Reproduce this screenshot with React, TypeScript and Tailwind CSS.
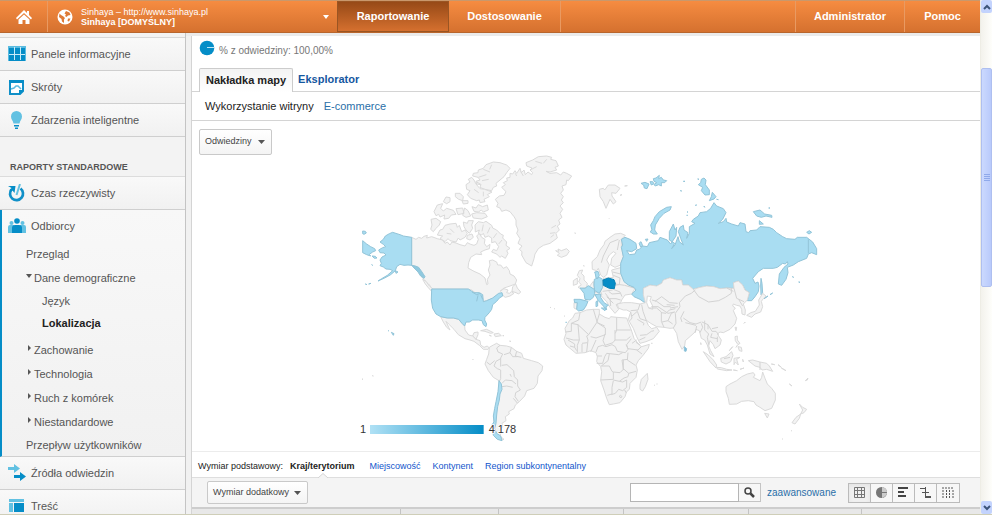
import React from "react";

const land = "fill-[#f3f3f3] stroke-[#dadada]";
const visited = "fill-[#a9ddf2] stroke-[#92c4d8]";

function WorldMap() {
  return (
    <svg viewBox="0 0 1440 900" className="block h-[300px] w-[480px]" role="img" aria-label="Mapa odwiedzin" strokeWidth="3" strokeLinejoin="round">
      <defs>
        <linearGradient id="scale" x1="0" x2="1" y1="0" y2="0">
          <stop offset="0" stopColor="#b0e1f5" />
          <stop offset="1" stopColor="#058dc7" />
        </linearGradient>
      </defs>

      {/* North America and Greenland */}
      <g className={land}>
        <path d="M185,262L198,268 206,262 215,265 222,259 232,256 230,264 245,260 262,266 278,270 285,280 292,276 300,285 306,276 318,279 330,284 345,288 352,278 362,283 372,286 380,282 385,268 380,258 388,250 395,262 405,268 403,280 410,290 420,283 418,296 405,300 392,306 395,314 378,312 362,322 356,338 354,354 372,364 390,372 405,384 410,404 414,402 412,388 420,375 415,360 420,345 418,332 428,330 440,336 443,345 452,345 460,355 470,350 478,362 480,372 492,378 500,390 496,402 480,408 462,414 450,424 462,416 474,420 470,428 478,430 484,425 492,430 480,438 466,442 460,438 456,430 440,440 425,446 410,452 400,455 398,445 390,432 378,430 365,420 350,417 245,417 240,406 234,402 222,388 212,378 196,350 185,346Z" />
        <path d="M218,388L228,394 238,408 252,420 244,423 234,412 226,402Z" />
        <path d="M488,410L497,402 502,414 512,426 506,432 498,428 486,424Z" />
        <path d="M375,225L385,215 400,218 408,214 425,226 428,234 440,240 452,252 460,256 458,264 470,276 468,286 480,295 470,302 474,310 466,325 455,318 450,322 440,312 425,306 430,298 440,302 446,290 436,275 425,278 425,264 415,258 405,262 400,250 395,255 385,250 388,240 376,246Z" />
        <path d="M262,255L270,240 278,238 285,226 300,222 318,220 322,232 328,226 335,245 345,240 352,250 345,262 330,270 325,264 318,276 300,272 294,266 285,275 270,265 278,258Z" />
        <path d="M243,208L258,205 272,215 268,225 258,235 250,245 242,238 246,225Z" />
        <path d="M340,216L352,220 355,212 370,212 365,225 368,235 358,250 348,240 342,230ZM352,256l14,-4 4,10 -10,8 -10,-4z" />
        <path d="M480,55L470,45 450,38 430,36 408,44 400,55 385,60 384,68 370,70 368,78 384,82 390,90 378,94 380,102 392,104 390,112 404,118 425,122 430,112 440,108 438,100 450,90 462,80 470,68Z" />
        <path d="M365,82L355,88 360,96 348,104 350,118 360,122 352,134 362,145 380,152 388,150 390,158 405,155 402,148 418,140 412,134 426,126 404,118 390,116 378,102 372,90Z" />
        <path d="M366,170L378,174 385,164 398,170 412,165 415,180 400,186 394,180 385,186 372,184ZM365,192L380,188 405,190 412,200 395,207 370,204Z" />
        <path d="M252,185l10,-20 16,-4 -6,14 8,8 10,-8 20,6 8,12 -14,2 -8,10 -14,2 2,-12 -14,6 -4,-8 -8,4zM280,155l8,-14 12,2 0,12 -10,6zM316,130l14,0 10,10 -2,12 -12,-4 -10,-8zM336,152l18,0 0,8 -14,2zM318,176l20,-2 4,16 -18,4zM344,174l10,8 8,16 -14,4 -10,-6z" />
        <path d="M480,70L488,72 495,62 500,70 510,55 514,68 522,60 526,74 534,66 545,74 548,68 540,60 546,54 530,48 528,38 548,30 565,20 590,18 605,22 602,28 618,32 625,48 615,52 620,60 600,66 588,64 600,70 620,68 632,75 640,66 650,70 665,78 655,92 650,90 648,104 636,108 640,120 632,130 640,140 634,150 640,158 630,168 638,178 630,190 636,202 626,210 630,222 622,228 628,240 618,250 622,264 600,280 580,286 565,296 555,312 552,326 545,348 528,338 515,315 516,305 508,298 516,288 504,280 510,266 500,250 504,240 498,225 498,210 492,200 480,185 468,180 455,184 450,174 440,170 444,160 436,148 448,138 462,136 468,125 455,112 466,104 460,98 472,92 470,84 480,82Z" />
        <path d="M617,302L626,304 624,297 634,302 650,296 658,304 650,316 634,322 622,316 628,310Z" />
      </g>
      <g className="fill-none stroke-[#dadada]">
        <path d="M400,58l20,8M385,82l24,-8M396,92l20,-4M425,44l-6,14M372,118l14,10M400,125l0,14M380,96l14,8M400,224l-4,20M420,232l-8,18M440,250l-10,14M456,270l-10,12M300,236l12,12M290,250l14,2M540,60l20,-10M556,34l20,6M590,28l-10,12M520,78l-8,-14M500,78l-4,-8M604,234l14,-8M600,250l16,-2M602,262l10,-8" />
      </g>
      <g className={visited}>
        <path d="M185,262L160,258 150,254 128,247 118,251 106,258 100,268 90,276 100,283 107,290 98,293 86,300 90,308 102,309 108,315 96,321 90,330 94,340 90,347 100,351 108,357 120,358 128,362 112,376 95,386 84,393 104,384 122,374 136,362 140,350 150,343 162,346 174,345 185,346Z" />
        <path d="M38,272L50,282 62,290 74,296 77,302 68,306 58,313 62,318 50,314 38,308ZM38,243l8,1 3,5 -7,4 -4,-2zM66,318l10,1 5,5 -8,1zM136,362l8,4 -6,4zM65,344l3,2zM46,402l5,2zM56,402l7,-2z" />
        <path className="fill-[#8fc9df]" d="M185,346L196,348 206,352 216,366 225,380 222,385 212,378 204,366 192,354Z" />
      </g>

      {/* United States, Latin America */}
      <g transform="translate(0 420)">
        <g className={land}>
          <path d="M272,80L292,84 310,84 326,88 336,100 344,108 345,120 356,135 368,138 372,128 384,126 384,134 378,148 390,152 392,165 402,172 412,168 418,174 414,178 400,178 388,166 372,154 360,150 345,146 325,134 312,118 296,102 288,94 296,112 300,120 290,112 280,96Z" />
          <path d="M392,122L410,118 430,128 422,130 405,124ZM432,132L446,130 454,137 436,140ZM458,137l4,0zM418,136l6,2zM480,152l1,4zM368,207l1,2zM36,267l3,1zM67,257l3,1zM600,52l3,1zM613,56l2,1zM643,78l2,1z" />
          <path d="M418,172L430,165 440,160 450,166 470,168 484,172 500,184 515,190 520,205 545,212 565,218 578,228 576,242 564,258 562,280 552,295 530,302 524,318 508,335 496,345 492,356 476,365 478,372 466,380 468,392 456,400 458,410 450,420 452,440 462,448 455,450 440,440 430,420 432,380 440,340 448,290 447,272 430,262 415,242 405,222 410,208 416,192Z" />
        </g>
        <path className="fill-none stroke-[#d3d3d3]" d="M450,166l-10,8 4,12 14,6 -6,12 0,26M484,172l-4,16 -18,6 M500,184l-4,14 18,4M480,188l8,12 14,0 M452,206l-14,8 -6,14 10,8 10,4 0,26 -4,8M410,216l10,8 14,-12M455,226l16,-2 20,18 2,18 10,10 0,18 8,12 -14,8 -2,12 10,14M456,280l10,-10 20,2 12,10M456,290l14,-2 18,4M490,325l12,14M484,260l-4,-8M368,138l10,10" />
        <g className={visited}>
          <path d="M245,-3L355,-3 372,8 388,8 398,14 400,35 410,32 428,24 446,10 456,8 458,18 448,24 440,34 428,44 425,58 418,68 405,82 404,90 410,102 408,110 400,104 396,92 385,90 368,90 358,96 348,96 344,108 336,100 326,88 310,84 292,84 272,80 258,72 248,55 244,30Z" />
          <path className="fill-none" d="M366,6l14,8 12,-4M384,16l-4,18M392,14l6,14" />
          <path d="M447,272L454,282 456,298 450,312 448,330 443,350 440,375 438,400 434,415 440,430 452,438 456,452 442,448 430,436 428,420 432,412 426,405 432,395 430,378 434,355 438,335 444,305Z" />
          <path d="M115,122l2,1zM124,127l8,4 -2,5zM647,97l3,0zM656,98l2,0z" />
        </g>
      </g>

      {/* Europe and northern Asia */}
      <g transform="translate(630 0)">
        <g className={land}>
          <path d="M118,118L130,115 134,120 145,105 165,105 180,115 168,130 155,128 156,138 168,155 160,162 150,148 138,175 130,155 120,140ZM180,136l6,-2zM194,108l8,-1zM148,206l1,1zM44,249l3,1zM70,347l3,1z" />
          <path d="M190,262L196,256 182,250 165,252 150,262 135,274 132,284 120,300 112,320 96,335 97,358 110,362 115,355 122,375 130,382 140,375 145,355 148,345 140,330 148,315 160,305 168,310 155,325 152,345 165,352 182,345 190,320 184,290 184,268Z" />
          <path d="M58,362L68,360 64,370 72,378 72,390 82,400 80,412 62,416 54,412 64,404 56,396 60,386 52,376ZM40,392L52,384 52,402 40,406Z" />
          <path d="M155,360L185,352 195,395 225,415 215,432 195,435 185,450 182,458 168,464 176,478 165,490 150,472 140,455 124,438 118,430 128,410 130,385 160,382Z" />
          <path d="M88,410L100,394 104,420ZM100,428l22,-4 4,10 -20,4zM42,458L52,458 50,478 42,474Z" />
        </g>
        <path className="fill-none stroke-[#d3d3d3]" d="M175,268l-25,10 -20,40 -6,20M178,270l-6,30M158,366l24,6M160,376l20,8 -2,20 -14,2M166,402l28,4 28,8M160,418l20,8 6,14M146,424l10,8 24,-2M136,430l12,16 20,0 14,4M150,446l2,22M128,424l30,-4M140,440l20,20" />
        <g className={visited}>
          <path d="M250,415L270,405 290,408 305,400 310,390 330,383 350,390 365,390 368,405 385,405 400,418 420,412 440,408 462,410 480,416 500,414 522,415 520,398 535,393 548,405 555,420 568,428 562,452 575,452 585,440 595,425 597,408 594,396 585,400 578,385 595,365 610,355 640,355 652,352 668,340 676,342 682,335 684,342 672,352 658,372 655,402 665,406 678,388 684,368 682,352 700,345 715,335 740,325 745,312 755,308 770,314 770,296 758,276 740,262 712,262 705,268 680,266 668,260 650,248 640,238 628,232 600,230 590,240 570,242 566,248 558,245 555,222 540,218 535,228 515,222 500,216 498,205 490,215 475,220 488,208 498,188 490,176 470,168 462,158 452,175 440,185 420,188 415,198 400,208 395,215 405,220 388,230 388,250 380,265 384,248 372,240 370,226 360,232 355,245 362,265 370,285 358,275 354,260 345,285 335,296 344,280 328,270 328,245 340,222 345,240 350,232 348,258 332,282 322,270 300,262 295,272 268,278 262,290 248,288 238,298 230,300 225,312 208,314 200,302 215,305 230,296 228,280 210,268 195,262 184,268 188,285 184,292 190,320 182,340 182,370 192,395 205,405 222,412 228,420 215,432 222,440 240,448 254,458 258,440 250,430Z" />
          <path d="M270,245L276,240 272,225 280,212 285,200 298,185 320,172 334,170 330,180 312,190 298,205 286,225 284,240 292,252 280,252Z" />
          <path d="M415,104L422,98 424,88 432,84 438,90 436,104 448,120 448,134 435,135 424,122 428,112ZM457,127L468,140 462,147 448,152 454,140ZM580,185L600,180 614,192 635,196 636,202 618,198 604,202 590,198ZM598,212L610,222 598,223ZM740,247l8,-5 7,5 -8,5zM603,385L606,400 608,430 603,435 602,405ZM237,280l6,-5 5,12 -6,4zM256,268l8,-1 -4,7z" />
          <path d="M243,100l12,-3 12,5 -6,14 -8,-2 -2,-9zM270,95l8,0 4,6 -8,4zM280,86l8,-2 10,-8 -2,10 8,-4 6,8 10,2 -6,6 -10,0 0,10 -8,-4 -10,4 -4,-4 8,-6 -8,-4zM370,94l5,0zM361,122l4,1zM381,186l3,0zM380,196l3,0zM406,166l4,-1zM432,168l2,4zM470,148l5,1zM413,87l4,1zM626,174l4,0zM697,380l4,2zM716,396l4,1zM612,446l12,-8zM630,434l8,-5z" />
          <path d="M103,388L118,382 128,388 128,412 118,430 104,422 102,405ZM106,372L104,366 114,364 118,376 112,386 108,384Z" />
          <path d="M60,414L75,415 85,407 103,418 104,430 100,442 90,450 75,448 72,430ZM42,448L60,448 84,454 78,468 70,480 56,483 50,478 52,458 44,458Z" />
          <path d="M105,434L122,432 122,442 132,458 145,466 138,470 140,480 130,468 115,452ZM124,474L138,474 135,482ZM108,455L113,452 113,468 108,470Z" />
          <path className="fill-none" d="M745,268l0,42" />
        </g>
        <path className="fill-[#058dc7] stroke-[#0580b6]" d="M129,390L145,384 162,389 166,400 163,416 148,415 130,406Z" />
      </g>

      {/* Africa, southern Asia, Oceania */}
      <g transform="translate(630 420)">
        <g className={land}>
          <path d="M45,70L60,68 80,60 100,58 118,58 118,72 135,82 148,86 152,80 170,82 200,84 205,98 214,120 222,145 238,165 245,170 268,163 265,175 250,195 235,212 228,225 232,240 228,262 210,280 208,298 200,305 195,320 180,338 160,342 148,344 140,325 132,300 122,272 125,245 122,230 110,215 112,200 108,188 92,182 75,188 48,190 30,175 18,165 12,148 18,130 15,115 28,92 38,84Z" />
          <path d="M262,250L264,268 256,290 248,303 240,298 240,285 244,268ZM274,160l3,0zM282,285l2,1zM290,282l2,0z" />
          <path d="M172,42L190,38 215,38 240,42 256,38 250,14 250,-5 270,-15 290,-12 305,-20 310,-30 330,-37 350,-30 365,-30 368,-15 385,-15 400,-2 420,-8 440,-12 462,-10 480,-4 500,-6 522,-5 520,-22 535,-27 548,-15 555,0 568,8 562,30 550,42 556,60 555,75 546,72 545,58 540,48 530,46 520,42 518,48 526,54 520,62 530,85 525,102 510,118 490,128 480,126 472,132 484,150 480,165 465,176 460,164 450,152 446,168 452,182 462,200 450,192 442,165 434,150 424,145 418,122 408,118 405,126 392,138 376,152 374,168 366,178 355,155 350,130 340,114 330,115 312,112 290,110 272,100 258,90 265,106 275,116 290,112 298,124 280,146 258,155 240,160 230,140 220,115 210,98 205,88 212,66 200,60 190,60 175,54Z" />
          <path d="M498,290L510,282 530,272 545,260 562,252 580,248 585,255 580,262 600,272 605,262 608,246 615,265 622,282 635,295 646,310 646,330 635,355 615,362 600,352 588,345 582,335 565,332 545,334 530,342 508,343 505,325 498,305ZM614,370L627,372 622,384Z" />
          <path d="M718,342L728,352 740,358 732,368 722,372 728,360ZM722,372L718,385 705,402 696,398 708,382Z" />
          <path d="M430,185L445,195 460,210 470,225 468,234 450,215ZM470,232L484,233 500,238 516,240 500,242 472,237ZM482,205L498,200 515,185 519,196 512,215 498,222 484,216ZM522,205L540,202 530,208 535,225 526,216 522,224ZM565,212L578,210 600,216 620,220 628,228 638,244 620,238 606,240 600,232 585,228ZM525,140L532,138 532,150 540,160 534,164 526,152ZM534,170l10,2 2,12 -8,-2zM508,182l10,-12zM532,166l-4,6zM520,240l12,2zM540,238l12,-4zM548,208l2,8zM634,222l10,2zM654,224l10,8zM664,234l14,8zM688,282l8,6zM736,272l6,-2 2,-6zM694,422l2,1zM666,447l2,0zM422,158l1,6zM525,112l5,0 -2,10zM552,100l4,-4z" />
          <path d="M560,76L572,68 586,64 598,45 596,30 608,10 618,18 610,26 604,34 608,50 602,66 585,72 575,82Z" />
        </g>
        <path className="fill-white stroke-[#dadada]" d="M262,18L274,20 270,32 278,48 278,58 266,54 260,38Z" />
        <path className="fill-none stroke-[#d3d3d3]" d="M60,68l-4,22 -22,10 0,24 -18,2M34,100l20,4 32,30 -6,4 4,12M54,104l4,46 -18,0 -22,-6M118,72l-8,26 -24,36M100,58l12,40 24,16 0,20 -28,10 -16,-4M112,98l22,10M170,82l0,38 42,0M165,120l0,30 -6,8 -24,8 -6,-14 6,-20M170,120l-4,10M108,150l-16,36M84,150l-4,36M58,150l-6,16 0,22M66,160l16,-2M66,162l0,24M24,150l20,12 0,10M30,168l14,4 6,10M108,186l6,-16 14,-4 10,4 18,-6 10,6 6,14 24,4 8,-10 -4,-14 14,-18M165,150l34,0 12,-10M198,164l6,12 30,4 10,-10M230,180l16,12M204,188l-2,22 24,16M188,188l-12,6 -36,-4 -6,10 -6,20 -18,0M112,198l14,0M148,192l-4,20 -20,16M124,228l24,0 8,16 4,2 0,22 -38,2M160,246l20,2 10,-10 -4,-28 18,-2M190,210l0,30M190,236l16,14 22,-6M206,250l-2,10 -12,4 -14,10 -18,-4M178,274l10,2 12,-6 0,22 -12,10M160,272l-4,20 0,20 -14,4M188,302l-12,-4 -10,12 -12,4M194,300l4,8M178,318l4,-2 4,4 -4,4zM230,150l-14,10M240,165l-12,-8" />
        <path className="fill-none stroke-[#d3d3d3]" d="M240,42l-6,18 -22,2M212,66l4,18 -6,8M216,78l16,-14 8,22 18,6M232,88l20,12 -2,6M245,44l4,20 10,28M240,136l20,-2 14,-10 8,-2M238,150l18,-8M266,54l24,0 14,12 0,28 8,18M274,50l20,0 30,20 20,-4M276,30l14,4 22,16 20,0M285,34l20,-14 24,18 24,2 M304,68l14,2 10,-10 18,-4M306,96l18,-4 10,-22 10,-4M324,92l14,10 M340,114l8,-14 -2,-30 14,-20 -2,-12 18,-20 18,-8 12,-10 M366,96l-4,-12 10,-20M370,84l20,14 18,4 16,-6 M376,98l32,8M410,108l-4,20M424,100l4,12 -8,16M426,96l18,8 0,14M434,92l0,28 12,12 -4,10 4,22M444,104l12,20 12,0 8,10M456,116l18,-4M456,130l-4,12 20,4M472,140l0,16M400,-2l16,22 30,16 30,-4 20,-10 18,-12 0,-16M500,-6l20,10M522,-5l8,30 22,10M536,28l12,20M600,216l0,24M492,206l18,-4M320,44l24,2M330,54l24,-4" />
        <g className={visited}>
          <path className="fill-[#7ebfe0]" d="M373,170L380,176 378,184 373,183Z" />
        </g>
      </g>

      <rect x="60" y="825" width="341" height="27" fill="url(#scale)" stroke="none" />
      <g className="fill-[#333] stroke-white font-['Liberation_Sans',Arial,sans-serif]" fontSize="33" strokeWidth="5" paintOrder="stroke">
        <text x="30" y="849">1</text>
        <text x="416" y="849">4 178</text>
      </g>
    </svg>
  );
}

function Caret({ className = "" }: { className?: string }) {
  return (
    <svg viewBox="0 0 8 4" className={`h-1 w-2 shrink-0 fill-[#555] ${className}`} aria-hidden="true">
      <path d="M0,0h7L3.500,4z" />
    </svg>
  );
}

const svgIcon = "h-[18px] w-[18px] shrink-0";

const icons: Record<string, React.ReactElement> = {
  panels: (
    <svg viewBox="0 0 18 18" className={svgIcon} aria-hidden="true">
      <path fill="#058dc7" d="M0,1h18v15H0z" />
      <path fill="#5bbbe0" d="M0,1h18v2H0zM0,1h1v15H0zM17,1h1v15h-1z" />
      <path stroke="#c9ebf8" d="M6.500,2v13M12.500,2v13M1,9.500h16" />
    </svg>
  ),
  shortcut: (
    <svg viewBox="0 0 18 18" className={svgIcon} aria-hidden="true">
      <path fill="#fff" stroke="#1190c8" strokeWidth="2" d="M2,3h13v10l-3,3H2z" />
      <path fill="#058dc7" d="M1,2h15v3H1zM11,17v-5h5z" />
      <path fill="none" stroke="#5bbbe0" strokeWidth="1.500" d="M3,11l3,-1 2,-2 2,0 3,3" />
    </svg>
  ),
  bulb: (
    <svg viewBox="0 0 18 18" className={svgIcon} aria-hidden="true">
      <path fill="#62c1e2" d="M8.500,0a5.500,5.500 0 0 1 5.500,5.500c0,3 -2,4 -2.500,7h-6c-.5,-3 -2.500,-4 -2.500,-7a5.500,5.500 0 0 1 5.500,-5.500z" />
      <path fill="#058dc7" d="M6,14h5v1.500H6zM7,16.500h3V18H7z" />
    </svg>
  ),
  realtime: (
    <svg viewBox="0 0 18 18" className={svgIcon} aria-hidden="true">
      <path fill="none" stroke="#1190c8" strokeWidth="2.700" d="M12.500,4.500a6.500,6.500 0 1 1 -9,1" />
      <path fill="#058dc7" d="M0,2l7.500,0 -1,7 -2,-2.500 -2,1.500 -1,-2 2,-2z" />
      <path stroke="#62c1e2" strokeWidth="2" d="M8.500,11l3.500,-11" />
    </svg>
  ),
  audience: (
    <svg viewBox="0 0 18 18" className={svgIcon} aria-hidden="true">
      <path fill="#62c1e2" d="M0,16V10q0,-2 2,-2h4v8zM12,8h4q2,0 2,2v6h-6z" />
      <circle cx="3.500" cy="6" r="2" fill="#62c1e2" />
      <circle cx="14.500" cy="6" r="2" fill="#62c1e2" />
      <circle cx="9" cy="4" r="2.800" fill="#058dc7" />
      <path fill="#058dc7" d="M4,16v-5q0,-3 3,-3h4q3,0 3,3v5z" />
    </svg>
  ),
  sources: (
    <svg viewBox="0 0 18 18" className={svgIcon} aria-hidden="true">
      <path fill="#62c1e2" d="M0,3h6V0l6,4.500L6,9V6H0z" />
      <path fill="#058dc7" d="M6,11h6V8l6,4.500L12,17v-3H6z" />
    </svg>
  ),
  content: (
    <svg viewBox="0 0 18 18" className={svgIcon} aria-hidden="true">
      <path fill="#62c1e2" d="M1,2h15v3H1zM1,6h4v9H1z" />
      <path fill="#058dc7" d="M6,6h10v9H6z" />
    </svg>
  ),
};

function NavRow({ icon, label }: { icon: string; label: string }) {
  return (
    <a href="#" className="flex h-[33px] shrink-0 items-center gap-[5px] border-b border-[#cfcfcf] bg-linear-to-b from-[#f9f9f9] to-[#f1f1f1] pl-2">
      {icons[icon]}
      <span>{label}</span>
    </a>
  );
}

function SubRow({ label, open }: { label: string; open?: boolean }) {
  return (
    <a href="#" className="flex h-6 items-center gap-0.5 pl-6">
      <svg viewBox="0 0 6 6" className="mb-1 h-1.5 w-1.5 fill-[#555]" aria-hidden="true">
        {open ? <path d="M0,1h6L3,5z" /> : <path d="M2,0L5,3 2,6z" />}
      </svg>
      {label}
    </a>
  );
}

function Sidebar() {
  return (
    <nav className="flex w-[186px] shrink-0 flex-col overflow-hidden border-r border-[#c4c4c4] bg-[#f3f3f3] pt-1 text-[11px] text-[#555]">
      <div className="border-t border-[#d8d8d8]" />
      <NavRow icon="panels" label="Panele informacyjne" />
      <NavRow icon="shortcut" label="Skróty" />
      <NavRow icon="bulb" label="Zdarzenia inteligentne" />
      <h2 className="flex h-10 shrink-0 items-end border-b border-[#dcdcdc] pb-0.5 pl-2.5 text-[9px] font-bold">RAPORTY STANDARDOWE</h2>
      <NavRow icon="realtime" label="Czas rzeczywisty" />
      <div className="shrink-0 border-b border-l-2 border-b-[#cfcfcf] border-l-[#058dc7] bg-linear-to-b from-[#f8f8f8] to-[#f1f1f1]">
        <a href="#" className="flex h-8 items-center gap-[5px] pl-1.5">
          {icons.audience}
          <span>Odbiorcy</span>
        </a>
        <a href="#" className="flex h-6 items-center pl-6">Przegląd</a>
        <SubRow open label="Dane demograficzne" />
        <a href="#" className="flex h-[22px] items-center pl-10">Język</a>
        <a href="#" className="flex h-[22px] items-center pl-10 font-bold text-[#222]">Lokalizacja</a>
        <div className="pt-1">
          <SubRow label="Zachowanie" />
          <SubRow label="Technologia" />
          <SubRow label="Ruch z komórek" />
          <SubRow label="Niestandardowe" />
        </div>
        <a href="#" className="flex h-[22px] items-center pl-6">Przepływ użytkowników</a>
      </div>
      <NavRow icon="sources" label="Źródła odwiedzin" />
      <NavRow icon="content" label="Treść" />
    </nav>
  );
}

function Header() {
  return (
    <header className="flex h-[33px] shrink-0 border-t border-b border-t-[#c9986c] border-b-[#b8662d] bg-linear-to-b from-[#f68c41] to-[#d5712f] text-[11px] font-bold text-white">
      <a href="#" aria-label="Strona główna" className="flex w-[47px] items-center justify-center">
        <svg viewBox="0 0 16 14" className="h-3.5 w-4 fill-white" aria-hidden="true">
          <path d="M8,0L11,3V1h2v4l3,3 -1,1.500L8,3 1,9.500 0,8zM8,4.500L13.500,9.500V14H9.500V10h-3v4H2.500V9.500z" />
        </svg>
      </a>
      <button type="button" className="flex w-[290px] items-center gap-2 border-l border-[#e99a62] pl-[9px] pr-2 text-left">
        <svg viewBox="0 0 16 16" className="h-4 w-4 shrink-0" aria-hidden="true">
          <circle cx="8" cy="8" r="7.500" fill="#fff" />
          <path fill="#df7a36" d="M2.500,4.500L4,6 6.500,7.500 8,9 7,10.500 7,14 5,12.500 4.500,10 2,8zM9,2L12.500,3.500 13.500,6 11,6.500 9.500,8 8,7 9,5.500 7.500,4.500zM11,9.500L13.500,9.500 12,12.500 10.500,12z" />
        </svg>
        <span className="flex-1 text-[9px] leading-[10px]">
          <span className="block font-normal">Sinhaya – http://www.sinhaya.pl</span>
          <span className="block">Sinhaya [DOMYŚLNY]</span>
        </span>
        <svg viewBox="0 0 6 4" className="h-1 w-1.5 fill-white" aria-hidden="true">
          <path d="M0,0h6L3,4z" />
        </svg>
      </button>
      <a href="#" className="flex w-28 items-center justify-center border border-[#9a5523] bg-linear-to-b from-[#974a17] to-[#d5702f]">Raportowanie</a>
      <a href="#" className="flex w-28 items-center justify-center border-r border-[#e99a62]">Dostosowanie</a>
      <a href="#" className="ml-auto flex w-[109px] items-center justify-center border-l border-[#e99a62]">Administrator</a>
      <a href="#" className="flex w-[76px] items-center justify-center border-l border-[#e99a62]">Pomoc</a>
    </header>
  );
}

const viewIcons: { label: string; art: React.ReactElement }[] = [
  { label: "Tabela", art: <path fill="none" stroke="#777" d="M.5,.5h10v10H.5zM.5,3.500h10M.5,7.500h10M3.500,.5v10M7.500,.5v10" /> },
  { label: "Wartość procentowa", art: <><circle cx="5.500" cy="5.500" r="5.500" fill="#777" /><path fill="#ccc" d="M6,5V0q5,1 5,5zM6,6h5q-1,4 -5,5z" /></> },
  { label: "Skuteczność", art: <path fill="#444" d="M0,0h10v2H0zM0,4h6v2H0zM0,8h8v2H0z" /> },
  { label: "Porównanie", art: <path fill="#555" d="M0,1h5v1H0zM5,0h1v11H5zM6,5h3v1H6zM2,5h3v1H2zM6,9h5v2H6z" /> },
  { label: "Przestawienie", art: <path fill="none" stroke="#555" strokeDasharray="2 1" d="M0,1h12M1,3v8M4.500,3v8M7.500,3v8M11,3v8" /> },
];

function Content() {
  return (
    <main className="ml-[5px] flex min-w-0 flex-1 flex-col border-l border-[#d4d4d4] bg-white text-[11px] text-[#222]">
      <div className="flex h-8 shrink-0 items-center gap-1 pb-1 pl-[7px] text-[10px] text-[#777]">
        <svg viewBox="0 0 16 16" className="mb-1 h-4 w-4" aria-hidden="true">
          <circle cx="8" cy="8" r="7.300" fill="#058dc7" />
          <path stroke="#bfe6f5" d="M8,7.500h7" />
        </svg>
        % z odwiedziny: 100,00%
      </div>
      <div className="flex h-6 shrink-0 items-stretch border-b border-[#d4d4d4] pl-[7px] font-bold">
        <a href="#" className="-mb-px flex items-center rounded-t-xs border border-b-0 border-[#ccc] bg-linear-to-b from-[#f3f3f3] to-white px-1.5">Nakładka mapy</a>
        <a href="#" className="flex items-center px-[5px] text-[#15579f]">Eksplorator</a>
      </div>
      <div className="flex h-[29px] shrink-0 items-center gap-2.5 border-b border-[#d4d4d4] pl-[13px]">
        <a href="#">Wykorzystanie witryny</a>
        <a href="#" className="text-[#2a6fa8]">E-commerce</a>
      </div>
      <div className="flex h-[331px] shrink-0 flex-col border-b border-[#ececec]">
        <div className="h-[29px] pl-[7px] pt-2">
          <button type="button" className="flex h-[26px] w-[73px] items-center justify-between rounded-xs border border-[#c9c9c9] bg-linear-to-b from-white to-[#f4f4f4] px-[5px] text-[9px] text-[#444]">
            Odwiedziny <Caret />
          </button>
        </div>
        <div className="flex justify-center pl-2">
          <WorldMap />
        </div>
      </div>
      <div className="flex h-[25px] shrink-0 items-center gap-3 pl-1.5 pt-[5px] text-[9px] text-[#1155cc]">
        <span className="-mr-[5px] text-[#222]">Wymiar podstawowy:</span>
        <a href="#" className="relative mr-[3px] flex h-5 items-center font-bold text-[#222]">
          Kraj/terytorium
          <svg viewBox="0 0 10 5" className="absolute -bottom-px left-7 h-[5px] w-2.5" aria-hidden="true">
            <path fill="#f4f4f4" stroke="#d4d4d4" d="M0,5L5,.5 10,5" />
          </svg>
        </a>
        <a href="#">Miejscowość</a>
        <a href="#">Kontynent</a>
        <a href="#">Region subkontynentalny</a>
      </div>
      <div className="flex h-[30px] shrink-0 items-center border-t border-[#dedede] bg-[#f4f4f4] pl-[15px] pr-5">
        <button type="button" className="flex h-[23px] w-[101px] items-center justify-between rounded-xs border border-[#c9c9c9] bg-linear-to-b from-white to-[#f4f4f4] px-[5px] text-[9px] text-[#444]">
          Wymiar dodatkowy <Caret />
        </button>
        <div className="ml-auto flex h-[19px] w-[131px]">
          <input type="text" aria-label="Szukaj" className="min-w-0 flex-1 border border-[#b5b5b5] bg-white px-1 outline-none" />
          <button type="button" aria-label="Szukaj w tabeli" className="flex w-[22px] items-center justify-center border border-l-0 border-[#c4c4c4] bg-[#f7f7f7]">
            <svg viewBox="0 0 11 11" className="h-[11px] w-[11px]" fill="none" stroke="#444" aria-hidden="true">
              <circle cx="4" cy="4" r="3" strokeWidth="1.500" />
              <path strokeWidth="2.500" d="M6.500,6.500L10,10" />
            </svg>
          </button>
        </div>
        <a href="#" className="ml-1.5 mr-3 text-[10px] text-[#2a6fa8]">zaawansowane</a>
        <div className="flex h-5 divide-x divide-[#bbb] border border-[#bbb]">
          {viewIcons.map((v, i) => (
            <button key={v.label} type="button" aria-label={v.label} className={`flex w-[22px] items-center justify-center ${i === 0 ? "bg-[#f0f0f0] inset-shadow-sm" : "bg-[#f7f7f7]"}`}>
              <svg viewBox="0 0 12 11" className="h-[11px] w-3" aria-hidden="true">{v.art}</svg>
            </button>
          ))}
        </div>
      </div>
      <div className="flex min-h-2 flex-1 divide-x divide-[#c4c4c4] border-t-2 border-[#cdcdcd] bg-[#e8e8e8]">
        <div className="w-[209px]" />
        <div className="w-[98px]" />
        <div className="w-[125px]" />
        <div className="w-[125px]" />
        <div className="w-[113px]" />
        <div className="flex-1" />
      </div>
    </main>
  );
}

function ScrollRail() {
  return (
    <div className="flex w-3 shrink-0 flex-col border-l border-[#eeede5] bg-linear-to-r from-[#f3f2ec] to-[#fefefb]">
      <button type="button" aria-label="Przewiń w górę" className="flex h-[13px] items-center justify-center rounded-xs bg-[#c3d3fd]">
        <svg viewBox="0 0 8 6" className="h-1.5 w-2" fill="none" stroke="#3c5379" strokeWidth="2" aria-hidden="true"><path d="M1,5L4,2 7,5" /></svg>
      </button>
      <div className="mt-[55px] flex h-[219px] items-center justify-center rounded-xs border border-[#aebff0] bg-linear-to-r from-[#cbd9fe] to-[#b9cafb]">
        <svg viewBox="0 0 6 8" className="h-2 w-1.5" stroke="#8fa9ea" aria-hidden="true"><path d="M0,.5h6M0,2.500h6M0,4.500h6M0,6.500h6" /></svg>
      </div>
      <button type="button" aria-label="Przewiń w dół" className="mt-auto flex h-[13px] items-center justify-center rounded-xs bg-[#c3d3fd]">
        <svg viewBox="0 0 8 6" className="h-1.5 w-2" fill="none" stroke="#3c5379" strokeWidth="2" aria-hidden="true"><path d="M1,1L4,4 7,1" /></svg>
      </button>
    </div>
  );
}

export default function App() {
  return (
    <div className="flex h-screen overflow-hidden border-b border-[#cfceb8] bg-[#f1f1f1] font-['Liberation_Sans',Arial,sans-serif]">
      <div className="flex min-w-0 flex-1 flex-col">
        <Header />
        <div className="flex min-h-0 flex-1">
          <Sidebar />
          <div className="flex min-w-0 flex-1 flex-col border-t-3 border-[#ebebeb]">
            <Content />
          </div>
        </div>
      </div>
      <ScrollRail />
    </div>
  );
}
